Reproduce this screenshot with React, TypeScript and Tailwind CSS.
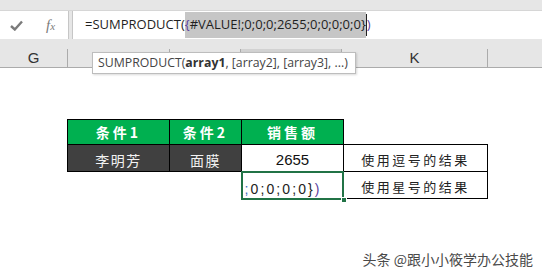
export default function App() {
  // labels of H, I and J sit under the function tooltip, so only G and K show
  const cols = [
    { name: "G", w: "w-[68px]", active: false },
    { name: "", w: "w-[102px]", active: false },
    { name: "", w: "w-[71px]", active: false },
    { name: "", w: "w-[101px]", active: true },
    { name: "K", w: "w-[146px]", active: false },
  ];

  return (
    <div className="relative w-[542px] h-[278px] overflow-hidden bg-white font-['Open_Sans',sans-serif]">
      {/* ribbon edge */}
      <div className="h-[11px] bg-[#e6e6e6] border-b border-[#d6d6d6]" />

      {/* formula bar */}
      <div className="flex h-[28px] bg-[#e6e6e6]">
        <div className="flex w-[69px] items-center bg-white border-r border-[#c6c6c6]">
          <svg className="ml-[10px]" width="13" height="11" viewBox="0 0 13 11">
            <path d="M1 6 L4.8 9.5 L12 1.5" fill="none" stroke="#7b7b7b" strokeWidth="2.4" />
          </svg>
          <span className="ml-[23px] font-['Liberation_Serif',serif] italic text-[15px] leading-none text-[#7b7b7b]">
            f<span className="text-[11px]">x</span>
          </span>
        </div>
        <div className="ml-[3px] flex flex-1 items-center bg-white border-l border-[#c6c6c6] pl-[12px] text-[13px] text-[#1f1f1f] whitespace-nowrap">
          <span>=SUMPRODUCT(</span>
          <span className="bg-[#c6c6c6] py-[3px]">
            <span className="text-[#5b3fa0]">{"{"}</span>#VALUE!;0;0;0;2655;0;0;0;0;0{"}"}
          </span>
          <span className="h-[22px] w-px bg-[#222]" />
          <span className="text-[#5b3fa0]">)</span>
        </div>
      </div>

      <div className="h-[10px] bg-[#e6e6e6]" />

      {/* column headers */}
      <div className="flex h-[19px] bg-[#e6e6e6] border-b border-[#ababab] font-['Liberation_Sans',sans-serif] text-[15px] text-[#333]">
        {cols.map((c, i) => (
          <div
            key={i}
            className={`${c.w} flex items-center justify-center border-r border-[#ababab] ${c.active ? "bg-[#d2d2d2]" : ""}`}
          >
            {c.name}
          </div>
        ))}
        <div className="flex-1" />
      </div>

      {/* sheet */}
      <div className="pl-[67px] pt-[51px]">
        <table className="border-collapse font-['Noto_Sans_CJK_SC',sans-serif] text-[14px]">
          <tbody>
            <tr className="h-[25px]">
              <td className="w-[102px] border border-black bg-[#00b050] text-center font-bold text-white tracking-[3px] leading-none">条件1</td>
              <td className="w-[72px] border border-black bg-[#00b050] text-center font-bold text-white tracking-[3px] leading-none">条件2</td>
              <td className="w-[102px] border border-black bg-[#00b050] text-center font-bold text-white tracking-[3px] leading-none">销售额</td>
              <td className="w-[144px]" />
            </tr>
            <tr className="h-[27px]">
              <td className="border border-black bg-[#404040] text-center text-[#f2f2f2] tracking-[1.5px] leading-none pt-[3px]">李明芳</td>
              <td className="border border-black bg-[#404040] text-center text-[#f2f2f2] tracking-[1.5px] leading-none pt-[3px]">面膜</td>
              <td className="border border-black text-center font-['Liberation_Sans',sans-serif] text-[15px] text-[#111] leading-none pt-[3px]">2655</td>
              <td className="border border-black text-center text-[13px] text-[#222] tracking-[2.5px] leading-none pt-[2px]">使用逗号的结果</td>
            </tr>
            <tr className="h-[27px]">
              <td />
              <td />
              <td className="relative p-0">
                <div className="absolute inset-x-[-1px] top-[-1px] bottom-[-1px] border-2 border-[#217346] flex items-end pb-[2px] pl-[2px] font-['Liberation_Sans',sans-serif] text-[14px] leading-none tracking-[2.1px] text-[#222] whitespace-nowrap">
                  <span className="text-[#3b6fc0]">;</span>0;0;0;0{"}"}<span className="text-[#5b3fa0]">)</span>
                </div>
                <div className="absolute right-[-4px] bottom-[-4px] h-[6px] w-[6px] bg-[#217346] border border-white" />
              </td>
              <td className="border border-black text-center text-[13px] text-[#222] tracking-[2.5px] leading-none pt-[2px]">使用星号的结果</td>
            </tr>
          </tbody>
        </table>
      </div>

      {/* function tooltip */}
      <div className="absolute left-[92px] top-[52px] flex h-[22px] w-[264px] items-center border border-[#bdbdbd] bg-white pl-[5px] text-[12.3px] text-[#444] shadow-[1px_1px_2px_rgba(0,0,0,0.15)] whitespace-nowrap">
        SUMPRODUCT(<span className="font-bold text-[#333]">array1</span>, [array2], [array3], ...)
      </div>

      {/* watermark */}
      <div className="absolute right-[9px] bottom-[12px] font-['Noto_Sans_CJK_SC',sans-serif] text-[14px] leading-none text-[#4a4a4a] [text-shadow:0_0_2px_#fff]">
        头条 @跟小小筱学办公技能
      </div>
    </div>
  );
}
